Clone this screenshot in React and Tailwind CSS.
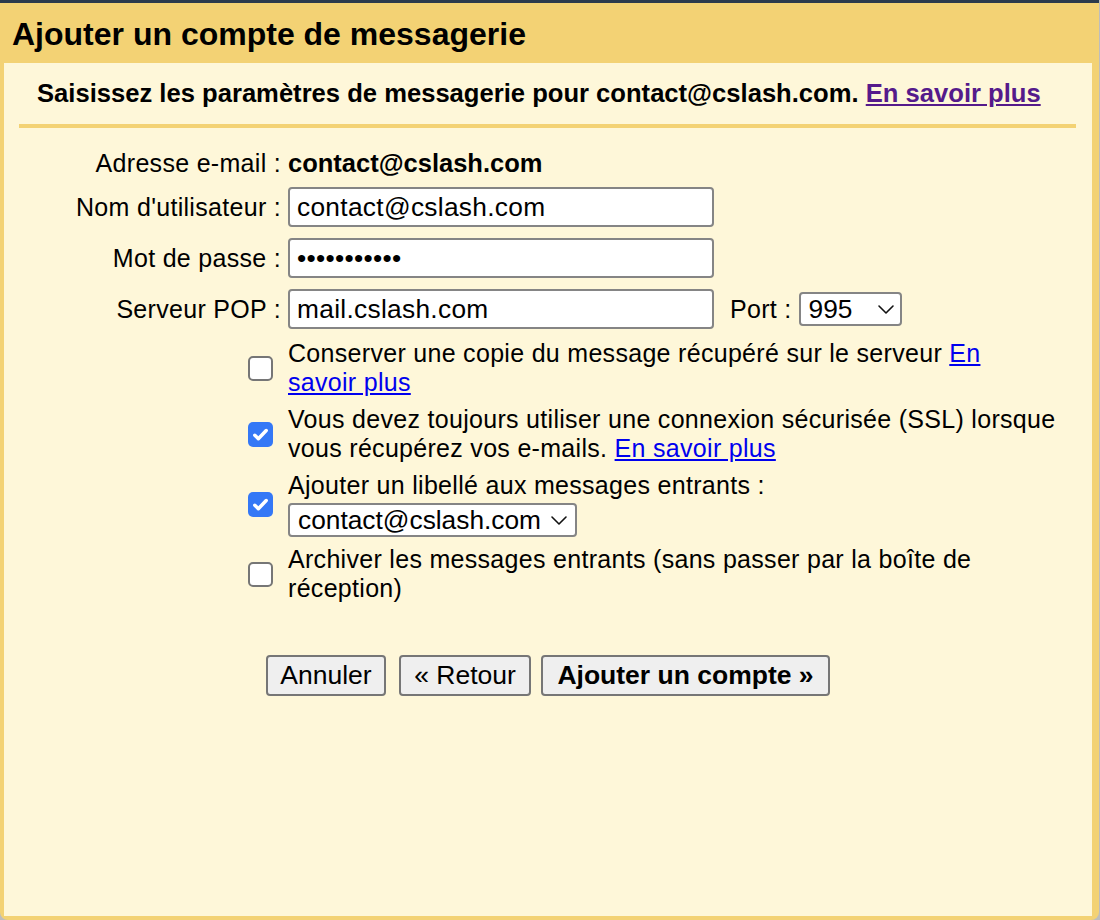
import { useState } from 'react';

const font = { fontFamily: '"Liberation Sans", Arial, Helvetica, sans-serif' };

function Box({ checked, onChange }) {
  return (
    <button
      type="button"
      onClick={onChange}
      className={`w-[25px] h-[25px] shrink-0 rounded-[5px] flex items-center justify-center ${
        checked ? 'bg-[#3478f6] border-0' : 'bg-white border-2 border-[#767676]'
      }`}
    >
      {checked && (
        <svg width="19" height="19" viewBox="0 0 16 16" fill="none">
          <path d="M3.2 8.6l3 3L12.8 4.6" stroke="white" strokeWidth="2.9" strokeLinecap="round" strokeLinejoin="round" />
        </svg>
      )}
    </button>
  );
}

function Chevron() {
  return (
    <svg width="18" height="11" viewBox="0 0 18 11" fill="none">
      <path d="M2 2l7 7 7-7" stroke="#111" strokeWidth="1.6" strokeLinecap="round" strokeLinejoin="round" />
    </svg>
  );
}

function Field({ label, children }) {
  return (
    <div className="flex items-center gap-[7px]">
      <div className="w-[277px] text-right shrink-0">{label}</div>
      {children}
    </div>
  );
}

function TextInput({ value, type = 'text' }) {
  return (
    <input
      type={type}
      defaultValue={value}
      className="w-[426px] h-[40px] bg-white border-2 border-[#858585] rounded-[4px] px-[7px] text-[26.3px] text-black outline-none"
      style={font}
    />
  );
}

export default function App() {
  const [opts, setOpts] = useState({ keep: false, ssl: true, label: true, archive: false });
  const toggle = k => setOpts(p => ({ ...p, [k]: !p[k] }));

  const rows = [
    {
      key: 'keep',
      body: (
        <>
          Conserver une copie du message récupéré sur le serveur{' '}
          <a href="#" className="text-[#0000ee] underline">En<br />savoir plus</a>
        </>
      ),
    },
    {
      key: 'ssl',
      body: (
        <>
          Vous devez toujours utiliser une connexion sécurisée (SSL) lorsque vous récupérez vos e-mails.{' '}
          <a href="#" className="text-[#0000ee] underline">En savoir plus</a>
        </>
      ),
    },
    {
      key: 'label',
      body: (
        <>
          <div>Ajouter un libellé aux messages entrants :</div>
          <div className="mt-[3px] w-[289px] h-[34px] bg-white border-2 border-[#858585] rounded-[4px] flex items-center justify-between pl-[8px] pr-[7px] text-[26.3px] tracking-normal">
            <span>contact@cslash.com</span>
            <Chevron />
          </div>
        </>
      ),
    },
    { key: 'archive', body: <>Archiver les messages entrants (sans passer par la boîte de réception)</> },
  ];

  const btn = 'h-[41px] bg-[#efefef] border-2 border-[#767676] rounded-[4px] text-[26.5px] tracking-normal';

  return (
    <div className="w-[1100px] h-[920px] bg-[#bdbdbd] overflow-hidden" style={font}>
      <div className="w-[1099px] h-[920px] bg-[#f3d274] border-t-[3px] border-[#2b3a4c] rounded-b-[8px] flex flex-col pl-[4px] pr-[7px] pb-[4px]">
        <div className="h-[60px] flex items-center pl-[8px] pt-[1px]">
          <h1 className="text-[32px] font-bold text-black leading-none">Ajouter un compte de messagerie</h1>
        </div>

        <div className="flex-1 bg-[#fef7d9] text-black text-[25px] leading-[29px] tracking-[0.3px]">
          <div className="pl-[33px] pt-[16px] text-[25.6px] font-bold leading-[28px] tracking-normal">
            Saisissez les paramètres de messagerie pour contact@cslash.com.{' '}
            <a href="#" className="text-[#551a8b] underline">En savoir plus</a>
          </div>
          <div className="ml-[15px] mr-[16px] mt-[17px] h-[4px] bg-[#f3d274]" />

          <div className="mt-[15px] flex flex-col">
            <Field label="Adresse e-mail :">
              <div className="h-[40px] flex items-center font-bold tracking-normal text-[25.5px]">contact@cslash.com</div>
            </Field>
            <div className="mt-[4px] flex flex-col gap-[11px]">
              <Field label="Nom d'utilisateur :">
                <TextInput value="contact@cslash.com" />
              </Field>
              <Field label="Mot de passe :">
                <TextInput value="contact@csl" type="password" />
              </Field>
              <Field label="Serveur POP :">
                <TextInput value="mail.cslash.com" />
                <span className="ml-[9px]">Port :</span>
                <div className="w-[103px] h-[34px] bg-white border-2 border-[#858585] rounded-[4px] flex items-center justify-between pl-[8px] pr-[5px] text-[26.3px] tracking-normal">
                  <span>995</span>
                  <Chevron />
                </div>
              </Field>
            </div>
          </div>

          <div className="mt-[10px] pl-[244px] flex flex-col gap-[8px]">
            {rows.map(r => (
              <div key={r.key} className="flex items-center gap-[15px]">
                <Box checked={opts[r.key]} onChange={() => toggle(r.key)} />
                <div className="w-[772px]">{r.body}</div>
              </div>
            ))}
          </div>

          <div className="mt-[52px] pl-[262px] flex items-center">
            <button className={`w-[120px] ${btn}`}>Annuler</button>
            <button className={`ml-[13px] w-[132px] ${btn}`}>« Retour</button>
            <button className={`ml-[10px] w-[289px] font-bold ${btn}`}>Ajouter un compte »</button>
          </div>
        </div>
      </div>
    </div>
  );
}
